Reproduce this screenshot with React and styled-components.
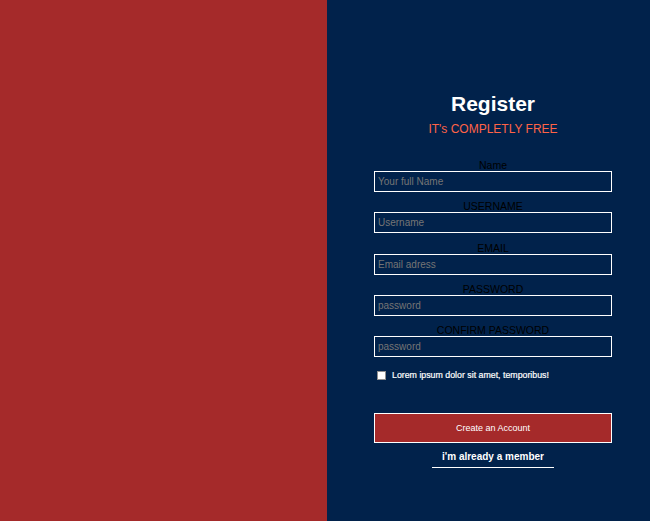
import styled, { createGlobalStyle } from "styled-components";

const GlobalStyle = createGlobalStyle`
  html, body {
    margin: 0;
    padding: 0;
    height: 100%;
  }
  body {
    font-family: "Liberation Sans", Arial, sans-serif;
  }
  #root {
    height: 100%;
  }
`;

const fields = [
  { label: "Name", placeholder: "Your full Name", type: "text" },
  { label: "USERNAME", placeholder: "Username", type: "text" },
  { label: "EMAIL", placeholder: "Email adress", type: "email" },
  { label: "PASSWORD", placeholder: "password", type: "password" },
  { label: "CONFIRM PASSWORD", placeholder: "password", type: "password" },
];

export default function App() {
  return (
    <>
      <GlobalStyle />
      <Container>
        <LeftPanel />
        <RightPanel>
          <Content>
            <Title>Register</Title>
            <Subtitle>IT's COMPLETLY FREE</Subtitle>
            <Form onSubmit={(e) => e.preventDefault()}>
              {fields.map((f) => (
                <Field key={f.label}>
                  <Label>{f.label}</Label>
                  <Input type={f.type} placeholder={f.placeholder} />
                </Field>
              ))}
              <CheckRow>
                <Check type="checkbox" />
                <CheckText>Lorem ipsum dolor sit amet, temporibus!</CheckText>
              </CheckRow>
              <Button type="submit">Create an Account</Button>
              <LinkWrapper>
                <MemberLink href="#">i'm already a member</MemberLink>
              </LinkWrapper>
            </Form>
          </Content>
        </RightPanel>
      </Container>
    </>
  );
}

const Container = styled.div`
  display: grid;
  grid-template-columns: 327px 1fr;
  width: 100%;
  height: 100vh;
`;

const LeftPanel = styled.div`
  background-color: #a52a2a;
`;

const RightPanel = styled.div`
  background-color: #01224b;
  padding: 92px 0 0 47px;
`;

const Content = styled.div`
  width: 238px;
  display: flex;
  flex-direction: column;
  align-items: stretch;
`;

const Title = styled.h1`
  margin: 0;
  font-size: 21px;
  line-height: 24px;
  font-weight: bold;
  color: #ffffff;
  text-align: center;
`;

const Subtitle = styled.p`
  margin: 6px 0 0;
  font-size: 12px;
  line-height: 14px;
  color: #ff6347;
  text-align: center;
`;

const Form = styled.form`
  margin-top: 21px;
  display: flex;
  flex-direction: column;
`;

const Field = styled.div`
  display: flex;
  flex-direction: column;
  margin-bottom: 6.3px;
`;

const Label = styled.label`
  padding-top: 2px;
  font-size: 10.5px;
  line-height: 12px;
  color: #000000;
  text-align: center;
`;

const Input = styled.input`
  box-sizing: border-box;
  height: 21px;
  width: 100%;
  padding: 0 3px;
  background: transparent;
  border: 1px solid #ffffff;
  color: #ffffff;
  font-family: "Liberation Sans", Arial, sans-serif;
  font-size: 10px;
  outline: none;

  &::placeholder {
    color: #757575;
  }
`;

const CheckRow = styled.div`
  display: flex;
  align-items: center;
  margin: 6px 0 0 3px;
  height: 12px;
`;

const Check = styled.input`
  appearance: none;
  margin: 0;
  width: 9px;
  height: 9px;
  background: #ffffff;
  border: 1px solid #8f8f8f;
  box-sizing: border-box;
`;

const CheckText = styled.span`
  margin-left: 6px;
  font-size: 8.8px;
  color: #ffffff;
  -webkit-text-stroke: 0.2px #ffffff;
`;

const Button = styled.button`
  margin-top: 32px;
  height: 30px;
  width: 100%;
  background-color: #a52a2a;
  border: 1px solid #ffffff;
  color: #ffffff;
  font-family: "Liberation Sans", Arial, sans-serif;
  font-size: 9px;
  cursor: pointer;
`;

const LinkWrapper = styled.div`
  display: flex;
  justify-content: center;
  margin-top: 7px;
`;

const MemberLink = styled.a`
  padding: 0 10px 3px;
  border-bottom: 1px solid #ffffff;
  color: #ffffff;
  font-size: 10px;
  font-weight: bold;
  line-height: 14px;
  text-decoration: none;
`;
